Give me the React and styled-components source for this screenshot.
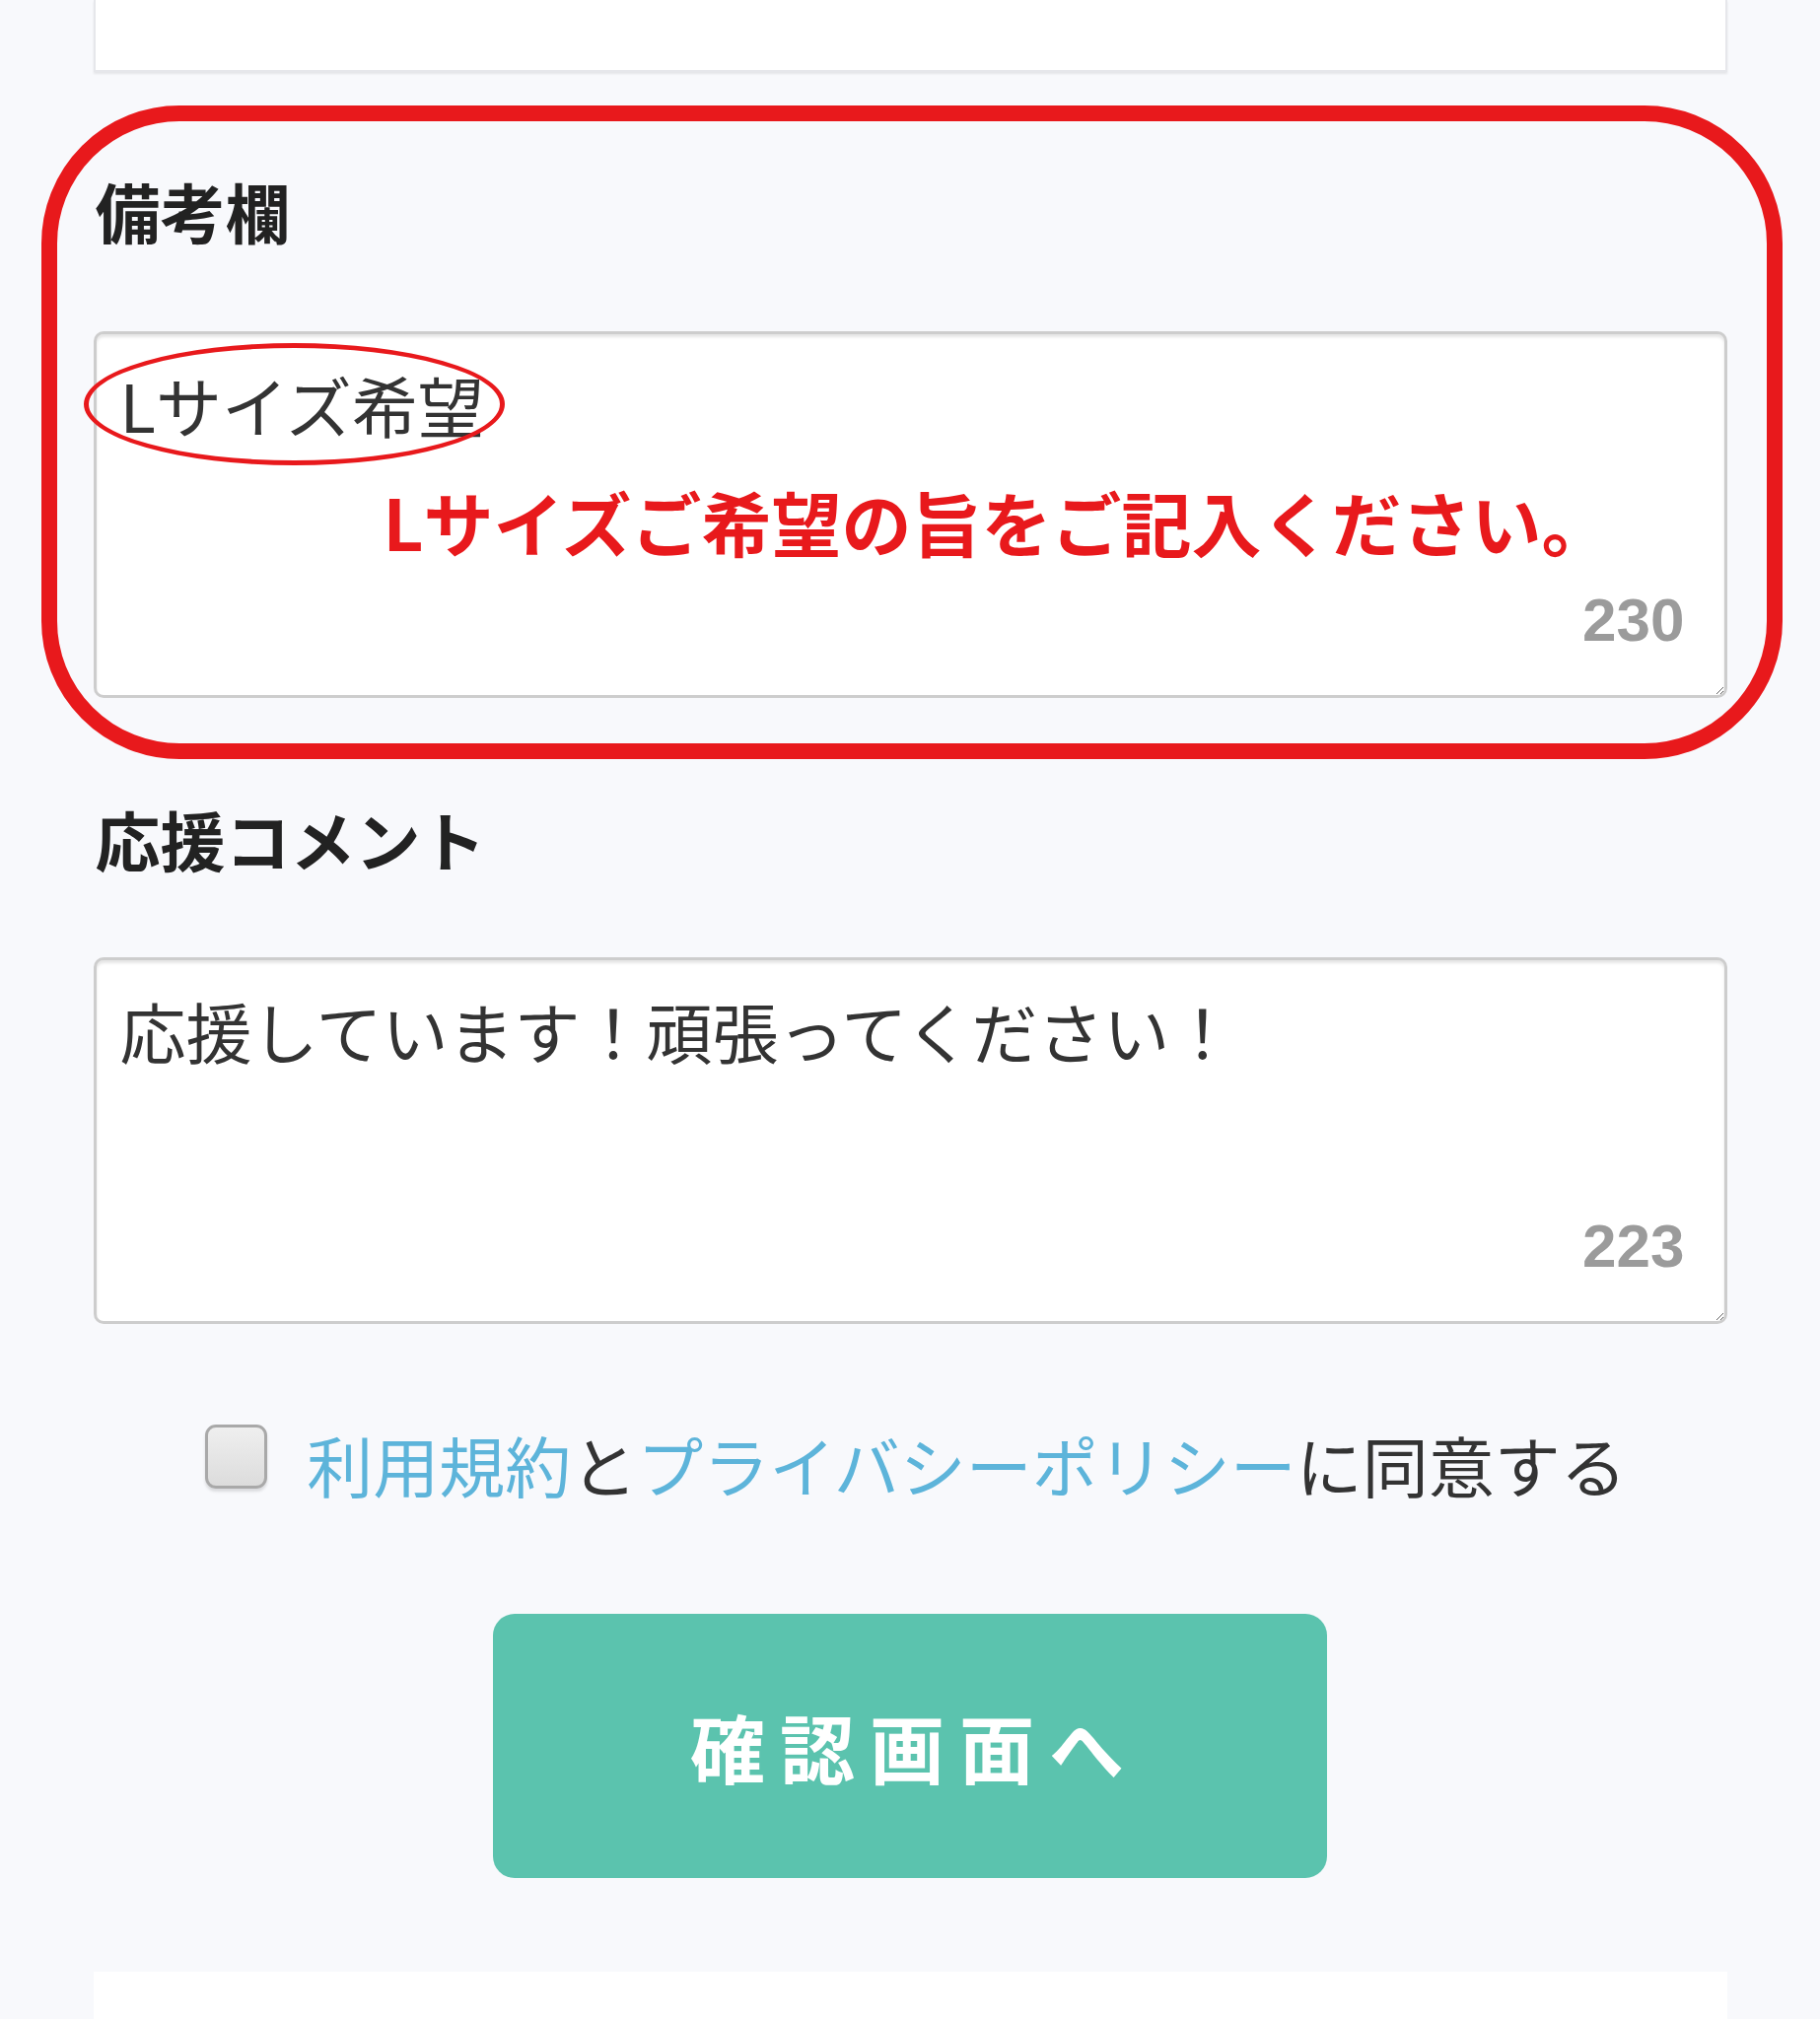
import React from "react";
import styled, { createGlobalStyle } from "styled-components";

const GlobalStyle = createGlobalStyle`
  html, body {
    margin: 0;
    padding: 0;
    background: #f8f9fc;
  }
  body {
    font-family: "Noto Sans CJK JP", "Noto Sans", sans-serif;
    color: #333;
  }
`;

const RED = "#e8191c";

const Page = styled.div`
  width: 1657px;
  margin: 0 auto;
  display: flex;
  flex-direction: column;
`;

const TopBox = styled.div`
  height: 71px;
  background: #fff;
  border: 2px solid #e6e7eb;
  border-top: none;
  box-shadow: 0 2px 2px rgba(0, 0, 0, 0.08);
`;

const Section = styled.section`
  position: relative;
  display: flex;
  flex-direction: column;
  margin-top: ${(p) => p.$top}px;
`;

const Label = styled.h2`
  margin: 0 0 ${(p) => p.$gap}px 0;
  font-family: "Noto Sans CJK JP", sans-serif;
  font-size: 66px;
  line-height: 1;
  font-weight: 700;
  color: #222;
  padding-left: 2px;
`;

const FieldWrap = styled.div`
  position: relative;
`;

const TextArea = styled.textarea`
  display: block;
  box-sizing: border-box;
  width: 100%;
  height: 372px;
  margin: 0;
  padding: 21px 22px 22px 24px;
  border: 3px solid #cdcdcd;
  border-radius: 10px;
  background: #fff;
  box-shadow: inset 0 3px 3px rgba(0, 0, 0, 0.1);
  font-family: "Noto Sans CJK JP", sans-serif;
  font-size: 67px;
  line-height: 1.5;
  color: #333;
  resize: vertical;
  outline: none;
`;

const Counter = styled.span`
  position: absolute;
  right: 43px;
  bottom: 48px;
  font-family: "Liberation Sans", Arial, sans-serif;
  font-weight: 700;
  font-size: 62px;
  line-height: 1;
  color: #9b9b9b;
  pointer-events: none;
`;

const Frame = styled.div`
  position: absolute;
  left: -53px;
  right: -56px;
  top: -73px;
  bottom: -62px;
  border: 16px solid ${RED};
  border-radius: 140px;
  pointer-events: none;
`;

const Ellipse = styled.div`
  position: absolute;
  left: -10px;
  top: 12px;
  width: 427px;
  height: 124px;
  box-sizing: border-box;
  border: 5px solid ${RED};
  border-radius: 50%;
  pointer-events: none;
`;

const Note = styled.div`
  position: absolute;
  left: 294px;
  top: 157px;
  font-family: "Noto Sans CJK JP", sans-serif;
  font-weight: 700;
  font-size: 71px;
  line-height: 1;
  color: ${RED};
  white-space: nowrap;
  pointer-events: none;
`;

const AgreeRow = styled.label`
  display: flex;
  justify-content: center;
  align-items: flex-start;
  gap: 40px;
  margin-top: 102px;
  margin-left: 12px;
`;

const Check = styled.input.attrs({ type: "checkbox" })`
  appearance: none;
  -webkit-appearance: none;
  margin: 0;
  width: 63px;
  height: 65px;
  box-sizing: border-box;
  border: 3px solid #a9a9a9;
  border-radius: 11px;
  background: linear-gradient(#efefef, #dcdcdc);
  box-shadow: 0 3px 3px rgba(0, 0, 0, 0.12);
  flex: none;
`;

const AgreeText = styled.span`
  font-family: "Noto Sans CJK JP", sans-serif;
  font-size: 67px;
  line-height: 1;
  color: #333;
  margin-top: 6px;
  white-space: nowrap;
`;

const Link = styled.a`
  color: #5db4da;
  text-decoration: none;
`;

const Submit = styled.button`
  align-self: center;
  margin-top: 119px;
  width: 846px;
  height: 268px;
  border: none;
  border-radius: 22px;
  background: #5bc3ae;
  color: #fff;
  font-family: "Noto Sans CJK JP", sans-serif;
  font-weight: 700;
  font-size: 76px;
  letter-spacing: 15px;
  text-indent: 9px;
  line-height: 1;
  cursor: pointer;
`;

const BottomCard = styled.div`
  margin-top: 95px;
  height: 48px;
  background: #fff;
`;

export default function App() {
  return (
    <>
      <GlobalStyle />
      <Page>
        <TopBox />

        <Section $top={107}>
          <Label $gap={90}>備考欄</Label>
          <FieldWrap>
            <TextArea defaultValue="Lサイズ希望" readOnly />
            <Counter>230</Counter>
            <Ellipse />
            <Note>Lサイズご希望の旨をご記入ください。</Note>
          </FieldWrap>
          <Frame />
        </Section>

        <Section $top={109}>
          <Label $gap={88}>応援コメント</Label>
          <FieldWrap>
            <TextArea defaultValue="応援しています！頑張ってください！" readOnly />
            <Counter>223</Counter>
          </FieldWrap>
        </Section>

        <AgreeRow>
          <Check />
          <AgreeText>
            <Link href="#">利用規約</Link>と<Link href="#">プライバシーポリシー</Link>に同意する
          </AgreeText>
        </AgreeRow>

        <Submit type="button">確認画面へ</Submit>

        <BottomCard />
      </Page>
    </>
  );
}
